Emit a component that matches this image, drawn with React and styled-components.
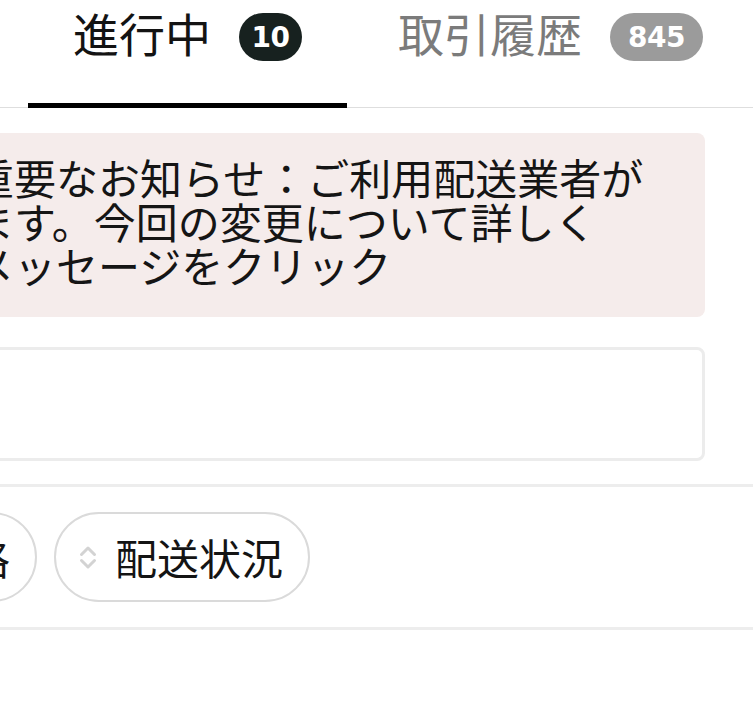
import React from 'react';
import styled, { createGlobalStyle } from 'styled-components';

const GlobalStyle = createGlobalStyle`
  html, body {
    margin: 0;
    padding: 0;
    background: #fff;
    overflow: hidden;
  }
  body {
    font-family: "Noto Sans CJK JP", "Noto Sans", sans-serif;
    color: #161616;
  }
`;

// the screenshot is a crop of a wider screen, its left part is out of view
export const Screen = styled.div`
  width: 893px;
  margin-left: -140px;
`;

export const TabBar = styled.div`
  display: flex;
  gap: 6px;
  height: 108px;
  padding-left: 168px;
  box-shadow: inset 0 -1px 0 #dedede;
`;

export const Tab = styled.div`
  display: flex;
  align-items: flex-start;
  gap: 28px;
  box-sizing: border-box;
  height: 108px;
  padding: 13px 45px 0;
  border-bottom: 5px solid ${props => props.active ? '#000' : 'transparent'};
  color: ${props => props.active ? '#131313' : '#7b7b7b'};
`;

export const TabLabel = styled.span`
  font-size: 46px;
  line-height: 38px;
  white-space: nowrap;
`;

export const TabBadge = styled.span`
  display: flex;
  align-items: center;
  justify-content: center;
  height: 48px;
  padding: 0 ${props => props.pad}px;
  border-radius: 24px;
  background: ${props => props.active ? '#17211f' : '#9b9b9b'};
  color: #fff;
  font-family: "DejaVu Sans", sans-serif;
  font-weight: bold;
  font-size: 28px;
  letter-spacing: -0.5px;
`;

export const Notice = styled.div`
  margin: 25px 48px 0 88px;
  padding: 22px 24px 30px;
  border-radius: 8px;
  background: #f5eceb;
  font-size: 42px;
  line-height: 44px;
  color: #151515;
`;

export const NoticeLine = styled.div`
  white-space: nowrap;
`;

export const SearchBox = styled.div`
  margin: 30px 48px 0 88px;
  height: 108px;
  border: 3px solid #ececec;
  border-radius: 8px;
  background: #fff;
`;

export const Divider = styled.div`
  height: 3px;
  background: #ededed;
  margin-top: ${props => props.top || 0}px;
`;

export const ChipRow = styled.div`
  display: flex;
  gap: 17px;
  padding: 25px 0 25px 5px;
`;

export const Chip = styled.div`
  display: flex;
  align-items: center;
  gap: 18px;
  height: 90px;
  box-sizing: border-box;
  padding: 0 25px 0 23px;
  border: 2.5px solid #dadada;
  border-radius: 45px;
  background: #fff;
`;

export const ChipLabel = styled.span`
  font-size: 42px;
  line-height: 40px;
  color: #141414;
  white-space: nowrap;
`;

const SortIcon = () => (
  <svg width="18" height="25" viewBox="0 0 18 25" fill="none" stroke="#d3d3d3" strokeWidth="3" strokeLinecap="round" strokeLinejoin="round">
    <polyline points="2.5,9.5 9,3 15.5,9.5" />
    <polyline points="2.5,15.5 9,22 15.5,15.5" />
  </svg>
);

const App = () => (
  <Screen>
    <GlobalStyle />
    <TabBar>
      <Tab active>
        <TabLabel>進行中</TabLabel>
        <TabBadge active pad={12.5}>10</TabBadge>
      </Tab>
      <Tab>
        <TabLabel>取引履歴</TabLabel>
        <TabBadge pad={18}>845</TabBadge>
      </Tab>
    </TabBar>
    <Notice>
      <NoticeLine>重要なお知らせ：ご利用配送業者が</NoticeLine>
      <NoticeLine>ます。今回の変更について詳しく</NoticeLine>
      <NoticeLine>メッセージをクリック</NoticeLine>
    </Notice>
    <SearchBox />
    <Divider top={23} />
    <ChipRow>
      <Chip>
        <SortIcon />
        <ChipLabel>価格</ChipLabel>
      </Chip>
      <Chip>
        <SortIcon />
        <ChipLabel>配送状況</ChipLabel>
      </Chip>
    </ChipRow>
    <Divider />
  </Screen>
);

export default App;
